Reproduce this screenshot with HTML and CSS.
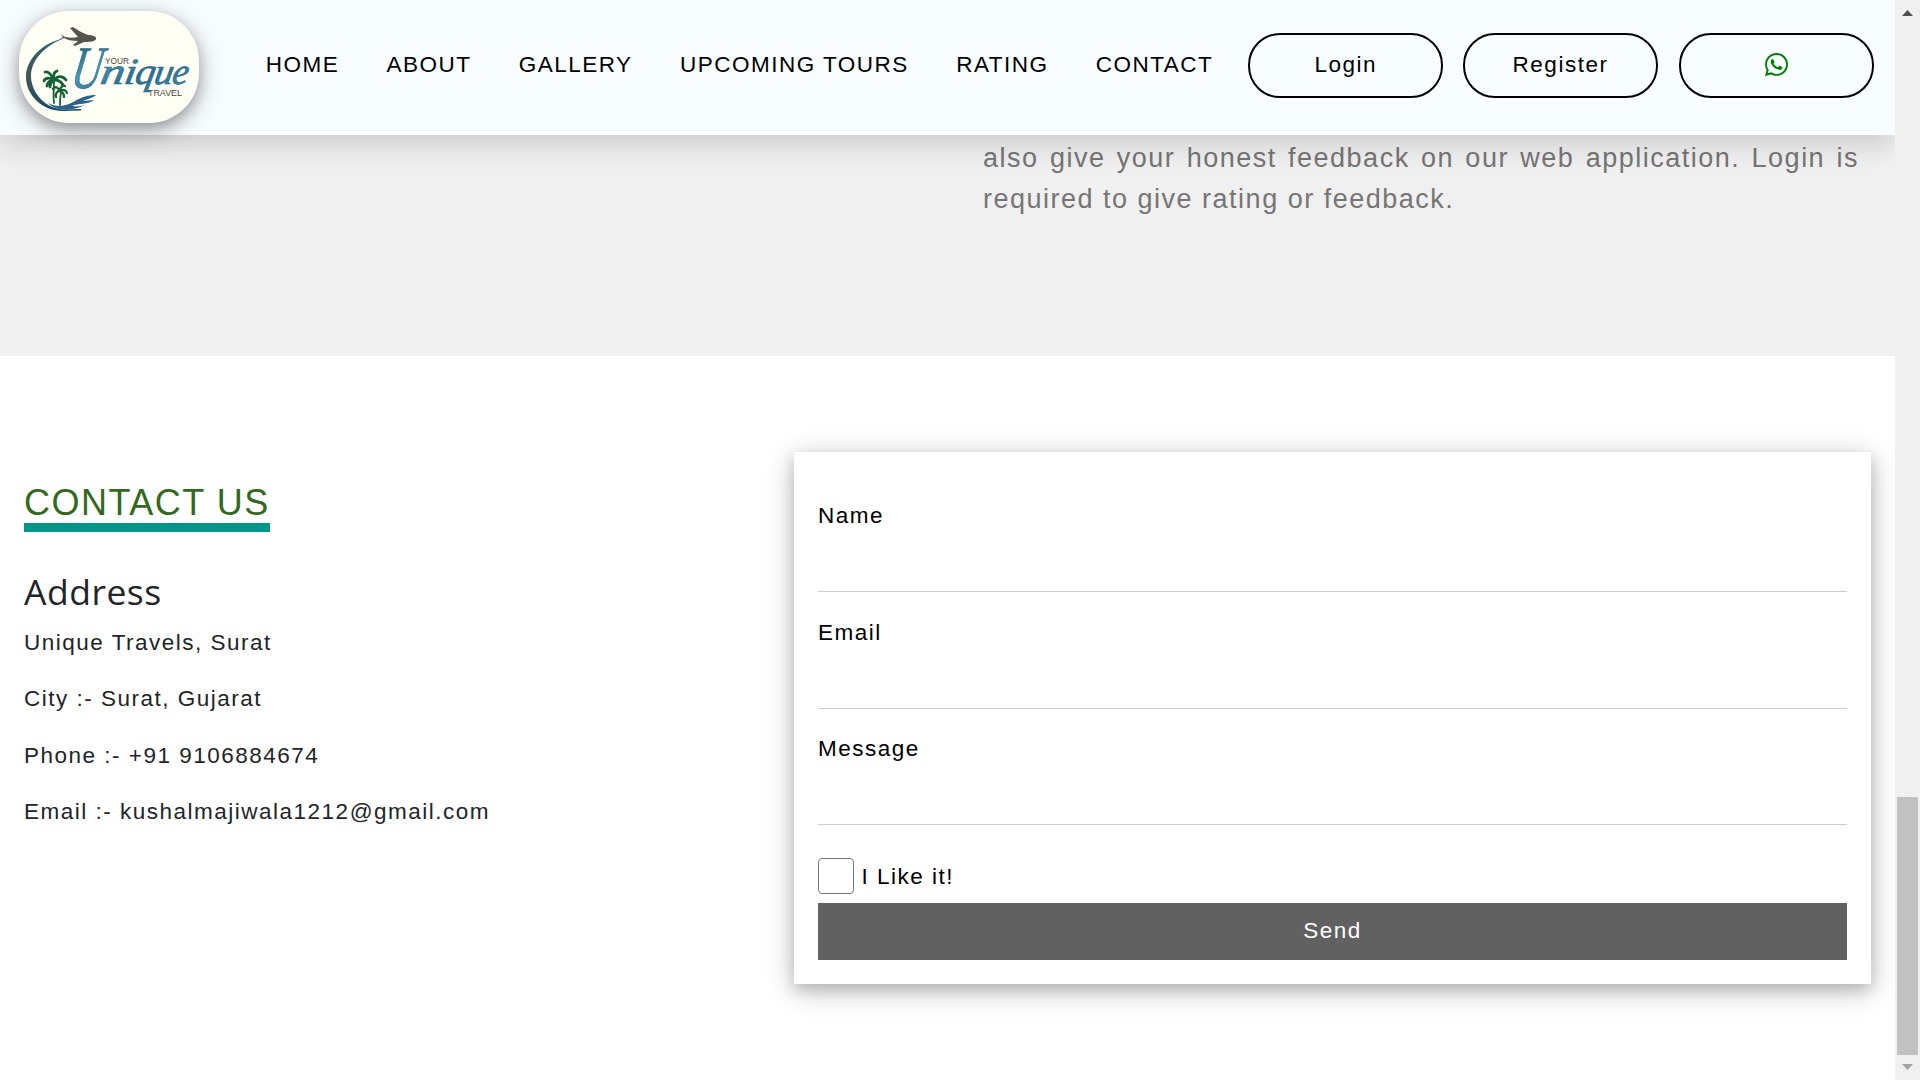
FILE: index.html
```html
<!DOCTYPE html>
<html lang="en">
<head>
<meta charset="utf-8">
<title>Unique Travels</title>
<link rel="stylesheet" href="styles.css">
</head>
<body>
<div class="page">
  <header class="header">
    <a class="logo">
      <svg viewBox="0 0 180 112" width="180" height="112">
        <defs>
          <linearGradient id="sea" x1="0" y1="0" x2="1" y2="1">
            <stop offset="0" stop-color="#234f68"/><stop offset=".35" stop-color="#4a9ab8"/>
            <stop offset=".6" stop-color="#2b6c8c"/><stop offset="1" stop-color="#4b93ad"/>
          </linearGradient>
          <linearGradient id="arc" x1="0" y1="0" x2="0" y2="1">
            <stop offset="0" stop-color="#2c6172"/><stop offset=".5" stop-color="#42565b"/><stop offset="1" stop-color="#174a64"/>
          </linearGradient>
        </defs>
        <path fill="url(#arc)" d="M46 27C22 32 7 49 7 66c0 18 16 34 37 34l18-.5v-1.500l-17 .5C27 98 12 82 12 65 12 49 26 34 46 27z"/>
        <path fill="#56544f" d="M42 23l4 3c5 1 9 1 13 0l-8-9 3-1c5 3 9 6 15 8 5 0 9 2 8 4-1 3-8 3-12 3l-9 4-2-1 5-4c-6 0-11-1-14-3l-5 1 4-2z"/>
        <g stroke="#146136" stroke-linecap="round" fill="none">
          <path stroke-width="1.800" d="M35 70c0 7-1 14 0 22M42 82c-1 4-1 7-1 12"/>
          <path stroke-width="2.800" d="M35 69c-3-6-6-9-9-8M35 69c-5-3-9-2-10 1M35 69c-4 0-7 3-7 6M35 69c-1-5 0-8 3-9M35 69c4-5 9-4 12 0M36 69c4 0 7 3 8 5M35 69c-3 2-4 4-4 7"/>
          <path stroke-width="2.300" d="M41 80c-2-4-5-5-7-2M41 80c-3 0-5 3-4 6M41 80c0-4 3-6 5-5M41 80c3-2 6-1 7 2M41 80c3 1 4 3 4 6"/>
        </g>
        <path fill="#2a628b" d="M29 92c10 5 19 3 27-2 7-4 13-6 21-6-3 3-9 4-13 6 4 0 8-1 11-1-7 5-15 3-22 6 5 1 9 0 13-1-12 6-29 7-37-2z"/>
        <text class="brand" y="77" fill="url(#sea)" transform="skewX(-10)"><tspan x="64" class="brand-cap" textLength="30" lengthAdjust="spacingAndGlyphs">U</tspan><tspan x="93" y="73" textLength="24" lengthAdjust="spacingAndGlyphs">n</tspan><tspan x="117" y="73" textLength="12" lengthAdjust="spacingAndGlyphs">i</tspan><tspan x="128" y="73" textLength="20" lengthAdjust="spacingAndGlyphs">q</tspan><tspan x="147" y="73" textLength="19" lengthAdjust="spacingAndGlyphs">u</tspan><tspan x="165" y="73" textLength="16" lengthAdjust="spacingAndGlyphs">e</tspan></text>
        <text class="brand-small" x="86" y="53" textLength="24" lengthAdjust="spacingAndGlyphs">YOUR</text>
        <text class="brand-small" x="129" y="85" textLength="34" lengthAdjust="spacingAndGlyphs">TRAVEL</text>
      </svg>
    </a>
    <nav class="nav">
      <a>HOME</a><a>ABOUT</a><a>GALLERY</a><a>UPCOMING TOURS</a><a>RATING</a><a>CONTACT</a>
    </nav>
    <div class="actions">
      <a class="pill">Login</a>
      <a class="pill">Register</a>
      <a class="pill">
        <svg class="whatsapp" viewBox="0 32 448 448"><path fill="currentColor" d="M380.9 97.1C339 55.1 283.2 32 223.9 32c-122.4 0-222 99.6-222 222 0 39.1 10.2 77.3 29.6 111L0 480l117.700-30.900c32.400 17.700 68.900 27 106.100 27h.1c122.300 0 224.100-99.600 224.100-222 0-59.300-25.200-115-67.100-157zm-157 341.600c-33.200 0-65.700-8.900-94-25.700l-6.700-4-69.800 18.300L72 359.200l-4.400-7c-18.500-29.400-28.200-63.300-28.200-98.200 0-101.700 82.800-184.500 184.600-184.500 49.300 0 95.600 19.200 130.400 54.100 34.800 34.900 56.200 81.200 56.100 130.500 0 101.800-84.900 184.600-186.600 184.600zm101.200-138.200c-5.500-2.800-32.800-16.200-37.900-18-5.100-1.900-8.800-2.800-12.500 2.800-3.700 5.600-14.300 18-17.600 21.800-3.200 3.700-6.500 4.200-12 1.400-32.600-16.300-54-29.100-75.500-66-5.700-9.800 5.700-9.100 16.300-30.300 1.800-3.700.9-6.900-.5-9.700-1.400-2.800-12.500-30.100-17.100-41.200-4.500-10.800-9.100-9.300-12.500-9.500-3.200-.2-6.900-.2-10.600-.2-3.700 0-9.700 1.400-14.800 6.900-5.100 5.600-19.400 19-19.400 46.300 0 27.300 19.900 53.700 22.600 57.400 2.800 3.700 39.100 59.700 94.800 83.800 35.200 15.200 49 16.500 66.600 13.900 10.700-1.600 32.800-13.400 37.400-26.400 4.600-13 4.600-24.100 3.200-26.400-1.300-2.500-5-3.900-10.500-6.600z"/></svg>
      </a>
    </div>
  </header>
  <section class="rating">
    <p>also give your honest feedback on our web application. Login is required to give rating or feedback.</p>
  </section>
  <section class="contact">
    <div class="details">
      <h2>CONTACT US</h2>
      <h3>Address</h3>
      <p>Unique Travels, Surat</p>
      <p>City :- Surat, Gujarat</p>
      <p>Phone :- +91 9106884674</p>
      <p>Email :- kushalmajiwala1212@gmail.com</p>
    </div>
    <form class="card">
      <div class="field"><label for="name">Name</label><input id="name" type="text"></div>
      <div class="field"><label for="email">Email</label><input id="email" type="text"></div>
      <div class="field"><label for="message">Message</label><input id="message" type="text"></div>
      <label class="like"><span class="box"></span><span class="like-text">I Like it!</span></label>
      <button class="send" type="button">Send</button>
    </form>
  </section>
</div>
<aside class="scrollbar">
  <svg class="arrow" viewBox="0 0 11 6"><path fill="#505050" d="M0 6L5.500 0 11 6z"/></svg>
  <div class="thumb"></div>
  <svg class="arrow" viewBox="0 0 11 6"><path fill="#a3a3a3" d="M0 0h11L5.500 6z"/></svg>
</aside>
</body>
</html>
```
FILE: styles.css
```css
* { box-sizing: border-box; }
body {
  margin: 0;
  height: 1080px;
  display: flex;
  overflow: hidden;
  background: #fff;
  color: #212529;
  font: 22.5px/33.75px "Liberation Sans", Arial, sans-serif;
  letter-spacing: 1.5px;
}
.page { width: 1895px; height: 1080px; overflow: hidden; }
.header {
  position: relative;
  z-index: 1;
  display: flex;
  align-items: flex-start;
  height: 135px;
  padding: 11px 21px 0 19px;
  background: #f8fdff;
  color: #000;
  box-shadow: 0 6px 30px rgba(0,0,0,.19);
}
.logo {
  width: 180px;
  height: 112px;
  border-radius: 50px;
  background: #fffff6;
  box-shadow: 0 6px 15px rgba(0,0,0,.3), 0 6px 30px rgba(0,0,0,.19);
}
.logo svg { display: block; }
.brand {
  font: italic 37px "Liberation Serif", serif;
  letter-spacing: 0;
  stroke: #2b6c8c;
  stroke-width: .7px;
}
.brand-cap { font-size: 60px; }
.brand-small {
  font: 9.500px "Liberation Sans", sans-serif;
  letter-spacing: 0;
  fill: #4a453f;
}
.nav { display: flex; padding: 37px 0 0 43px; }
.nav a { padding: 0 23.650px; white-space: nowrap; }
.actions { display: flex; gap: 20.400px; margin: 22px 0 0 auto; }
.pill {
  display: flex;
  justify-content: center;
  align-items: center;
  width: 195px;
  height: 65px;
  padding-bottom: 2px;
  border: 2px solid #000;
  border-radius: 32px;
}
.pill:nth-child(2) { margin: 0 .6px 0 -.6px; }
.whatsapp { width: 23px; height: 23px; margin-right: 1px; color: #008000; }
.rating {
  height: 221px;
  padding: 3px 36px 0 983px;
  background: #f0f0f0;
}
.rating p {
  margin: 0;
  color: #757575;
  font-size: 27px;
  line-height: 40.500px;
  text-align: justify;
}
.contact {
  display: flex;
  justify-content: space-between;
  align-items: flex-start;
  height: 724px;
  padding: 96px 24px 0;
}
.details { padding-top: 27px; }
.details h2 {
  display: inline-block;
  margin: 0;
  border-bottom: 9px solid #009688;
  color: #33691e;
  font-size: 36px;
  font-weight: 400;
  line-height: 47px;
  height: 53px;
}
.details h3 {
  margin: 32px 0 8px;
  font: 35.500px/54px "Open Sans", "Noto Sans", sans-serif;
  letter-spacing: .5px;
}
.details p { margin: 0 0 22.500px; }
.card {
  width: 1077px;
  height: 532px;
  padding: 47px 24px 24px;
  color: #000;
  box-shadow: 0 6px 15px rgba(0,0,0,.2), 0 6px 30px rgba(0,0,0,.19);
}
.field { height: 116.500px; }
.field label { display: block; height: 34px; }
.field input {
  display: block;
  width: 100%;
  height: 59px;
  padding: 12px;
  border: 0;
  border-bottom: 1px solid #ccc;
  font: inherit;
}
.like { display: flex; align-items: center; gap: 7.500px; height: 36px; margin-top: 9px; }
.like-text { padding-top: 2px; }
.box {
  width: 36px;
  height: 36px;
  border: 1.500px solid #767676;
  border-radius: 4px;
}
.send {
  display: block;
  width: 100%;
  height: 57px;
  margin-top: 9px;
  padding: 0;
  border: 0;
  background: #616161;
  color: #fff;
  font: inherit;
  letter-spacing: inherit;
}
.scrollbar {
  display: flex;
  flex-direction: column;
  align-items: center;
  width: 25px;
  height: 1080px;
  padding: 10px 0;
  background: #f0f0f0;
}
.arrow { width: 11px; height: 6px; }
.thumb { width: 21px; height: 258px; margin: auto 0 9px; background: #c1c1c1; }
```
